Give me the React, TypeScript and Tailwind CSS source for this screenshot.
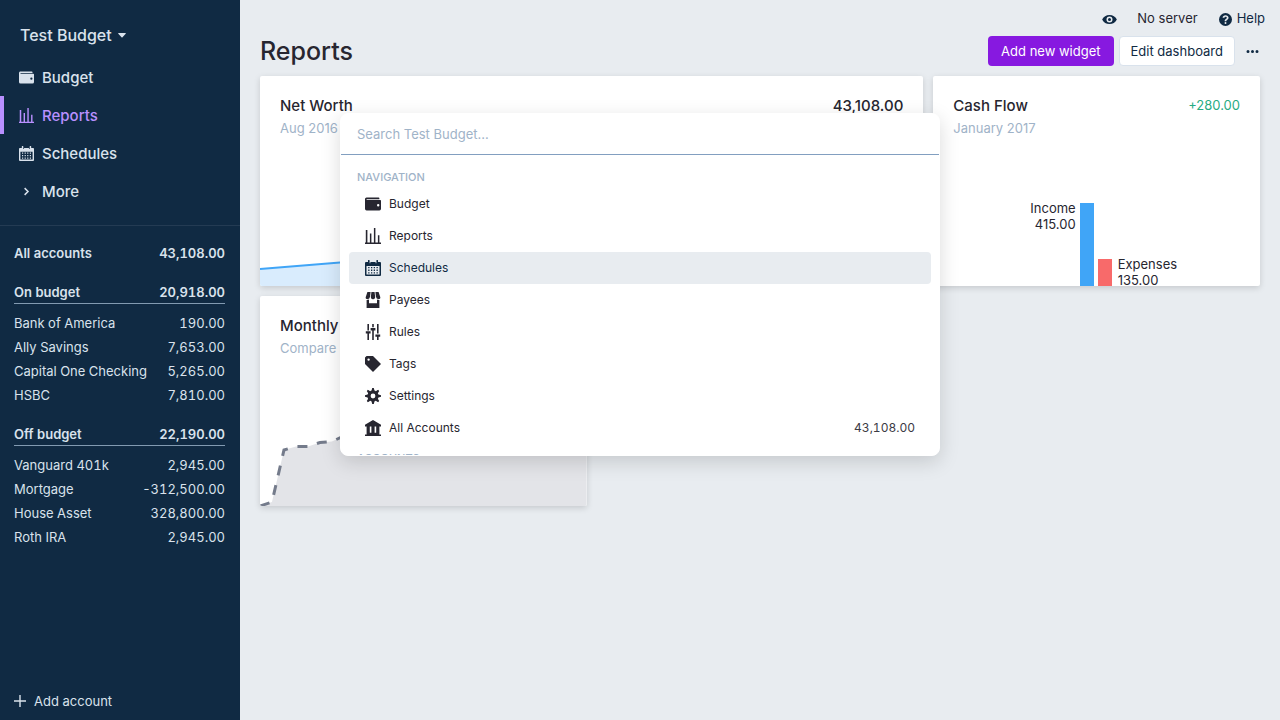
import type { ReactNode } from 'react';

type IconProps = { className?: string };

function Svg({ className, box = 20, children }: IconProps & { box?: number; children: ReactNode }) {
  return (
    <svg viewBox={`0 0 ${box} ${box}`} className={`shrink-0 fill-current ${className ?? ''}`} aria-hidden="true">
      {children}
    </svg>
  );
}

const WalletIcon = (p: IconProps) => (
  <Svg {...p}>
    <path d="M0 4c0-1.1.9-2 2-2h15a1 1 0 0 1 1 1v1H2v1h17a1 1 0 0 1 1 1v10a2 2 0 0 1-2 2H2a2 2 0 0 1-2-2V4zm16.5 9a1.5 1.5 0 1 0 0-3 1.5 1.5 0 0 0 0 3z" />
  </Svg>
);

const ReportsIcon = (p: IconProps) => (
  <Svg {...p} box={16}>
    <path d="M0 14.6h16V16H0zM.8 2h1.6v13H.8zM4.9 5.4h1.5V15H4.9zM8.9 0h1.5v15H8.9zM12.9 7.2h1.5V15h-1.5z" />
  </Svg>
);

const CalendarIcon = (p: IconProps) => (
  <Svg {...p} box={16}>
    <path
      fillRule="evenodd"
      d="M1 2h2V.7a.8.800 0 0 1 1.600 0V3.300h.8V2h5.200v1.300h.8V.7a.8.800 0 0 1 1.600 0V2h2a1 1 0 0 1 1 1v12a1 1 0 0 1-1 1H1a1 1 0 0 1-1-1V3a1 1 0 0 1 1-1zM1.500 6v8.500h13V6z"
    />
    <path d="M3.200 7h1.300v1.300H3.200zm2.800 0h1.300v1.300H6zm2.700 0H10v1.300H8.700zm2.800 0h1.300v1.300h-1.300zM3.200 9.600h1.300v1.300H3.200zm2.800 0h1.300v1.300H6zm2.700 0H10v1.300H8.700zm2.800 0h1.300v1.300h-1.300zM3.200 12.200h1.300v1.300H3.200zm2.800 0h1.300v1.300H6zm2.700 0H10v1.300H8.700zm2.800 0h1.300v1.300h-1.300z" />
  </Svg>
);

const StoreIcon = (p: IconProps) => (
  <Svg {...p}>
    <path d="M18 9.870V20H2V9.870a4.250 4.250 0 0 0 3-.38V14h10V9.500a4.260 4.260 0 0 0 3 .37zM3 0h4l-.67 6.030A3.430 3.430 0 0 1 3 9C1.340 9 .42 7.730.95 6.150L3 0zm5 0h4l.7 6.300c.17 1.500-.91 2.700-2.420 2.700h-.56A2.380 2.380 0 0 1 7.300 6.300L8 0zm5 0h4l2.050 6.150C19.580 7.730 18.650 9 17 9a3.420 3.420 0 0 1-3.330-2.970L13 0z" />
  </Svg>
);

const TuningIcon = (p: IconProps) => (
  <Svg {...p}>
    <path d="M17 16v4h-2v-4h-2v-3h6v3h-2zM1 9h6v3H1V9zm6-4h6v3H7V5zM3 0h2v8H3V0zm12 0h2v12h-2V0zM9 0h2v4H9V0zM3 12h2v8H3v-8zm6-4h2v12H9V8z" />
  </Svg>
);

const TagIcon = (p: IconProps) => (
  <Svg {...p}>
    <path d="M0 10V2l2-2h8l10 10-10 10L0 10zm4.500-4a1.500 1.500 0 1 0 0-3 1.500 1.500 0 0 0 0 3z" />
  </Svg>
);

const CogIcon = (p: IconProps) => (
  <Svg {...p}>
    <path d="M3.940 6.500L2.220 3.640l1.420-1.420L6.500 3.940c.52-.3 1.100-.54 1.700-.7L9 0h2l.8 3.240c.6.16 1.180.4 1.700.7l2.860-1.720 1.420 1.420-1.720 2.860c.3.52.54 1.100.7 1.700L20 9v2l-3.240.8c-.16.6-.4 1.180-.7 1.700l1.720 2.860-1.420 1.420-2.860-1.720c-.52.3-1.100.54-1.700.7L11 20H9l-.8-3.240c-.6-.16-1.180-.4-1.700-.7l-2.860 1.720-1.420-1.420 1.720-2.860c-.3-.52-.54-1.100-.7-1.700L0 11V9l3.240-.8c.16-.6.4-1.180.7-1.700zM10 13a3 3 0 1 0 0-6 3 3 0 0 0 0 6z" />
  </Svg>
);

const BankIcon = (p: IconProps) => (
  <Svg {...p}>
    <path d="M0 6l10-6 10 6v2H0V6zm0 12h20v2H0v-2zm2-2h16v2H2v-2zm0-8h4v8H2V8zm6 0h4v8H8V8zm6 0h4v8h-4V8z" />
  </Svg>
);

const EyeIcon = (p: IconProps) => (
  <Svg {...p}>
    <path d="M.2 10a11 11 0 0 1 19.600 0A11 11 0 0 1 .2 10zm9.800 4a4 4 0 1 0 0-8 4 4 0 0 0 0 8zm0-2a2 2 0 1 1 0-4 2 2 0 0 1 0 4z" />
  </Svg>
);

const HelpIcon = (p: IconProps) => (
  <Svg {...p}>
    <path
      fillRule="evenodd"
      d="M10 20a10 10 0 1 1 0-20 10 10 0 0 1 0 20zm2-12.800c0 .5-.2.900-.6 1.200L10 9.500c-.8.700-1.300 1.400-1.300 2.500v.8h2.700v-.6c0-.4.2-.7.500-1l1.400-1.100c.9-.7 1.400-1.700 1.400-2.900C14.700 4.800 12.700 3.300 10.100 3.300 7.500 3.300 5.600 4.800 5.500 7.300h2.800c.1-1 .8-1.600 1.800-1.600s1.900.5 1.900 1.500zM10 14a1.500 1.500 0 1 0 0 3 1.500 1.500 0 0 0 0-3z"
    />
  </Svg>
);

const DotsIcon = (p: IconProps) => (
  <Svg {...p}>
    <path d="M4 12a2 2 0 1 1 0-4 2 2 0 0 1 0 4zm6 0a2 2 0 1 1 0-4 2 2 0 0 1 0 4zm6 0a2 2 0 1 1 0-4 2 2 0 0 1 0 4z" />
  </Svg>
);

const ChevronIcon = (p: IconProps) => (
  <Svg {...p} box={12}>
    <path d="M3.500 1.500L8 6l-4.500 4.500" fill="none" stroke="currentColor" strokeWidth="2" />
  </Svg>
);

const PlusIcon = (p: IconProps) => (
  <Svg {...p} box={12}>
    <path d="M5.300 0h1.400v5.300H12v1.400H6.700V12H5.300V6.700H0V5.300h5.300z" />
  </Svg>
);

const CaretIcon = (p: IconProps) => (
  <Svg {...p} box={8}>
    <path d="M.6 2h6.800a.4.4 0 0 1 .3.700L4.500 6.300a.7.700 0 0 1-1 0L.3 2.700A.4.4 0 0 1 .6 2z" />
  </Svg>
);

type Icon = (p: IconProps) => ReactNode;

const mainNav: { label: string; icon: Icon; active?: boolean }[] = [
  { label: 'Budget', icon: WalletIcon },
  { label: 'Reports', icon: ReportsIcon, active: true },
  { label: 'Schedules', icon: CalendarIcon },
  { label: 'More', icon: ChevronIcon },
];

const accountGroups = [
  {
    name: 'On budget',
    total: '20,918.00',
    accounts: [
      ['Bank of America', '190.00'],
      ['Ally Savings', '7,653.00'],
      ['Capital One Checking', '5,265.00'],
      ['HSBC', '7,810.00'],
    ],
  },
  {
    name: 'Off budget',
    total: '22,190.00',
    accounts: [
      ['Vanguard 401k', '2,945.00'],
      ['Mortgage', '-312,500.00'],
      ['House Asset', '328,800.00'],
      ['Roth IRA', '2,945.00'],
    ],
  },
];

const commands: { label: string; icon: Icon; selected?: boolean; amount?: string }[] = [
  { label: 'Budget', icon: WalletIcon },
  { label: 'Reports', icon: ReportsIcon },
  { label: 'Schedules', icon: CalendarIcon, selected: true },
  { label: 'Payees', icon: StoreIcon },
  { label: 'Rules', icon: TuningIcon },
  { label: 'Tags', icon: TagIcon },
  { label: 'Settings', icon: CogIcon },
  { label: 'All Accounts', icon: BankIcon, amount: '43,108.00' },
];

function Sidebar() {
  return (
    <aside className="flex w-60 shrink-0 flex-col bg-[#102a43] text-[#d9e2ec]">
      <button type="button" className="mt-5 flex h-[30px] items-center gap-1.5 self-start pl-5 text-base font-medium">
        Test Budget
        <CaretIcon className="size-2" />
      </button>
      <nav className="mt-2 border-b border-[#243b53] pb-[15px]">
        {mainNav.map(({ label, icon: ItemIcon, active }) => (
          <a
            key={label}
            href="#"
            className={`flex h-[38px] items-center gap-2 border-l-4 pl-[15px] text-[15px] font-medium ${
              active ? 'border-[#b990ff] text-[#b990ff]' : 'border-transparent'
            }`}
          >
            <span className="flex w-[15px] justify-center">
              <ItemIcon className={label === 'More' ? 'size-[9px]' : 'size-[15px]'} />
            </span>
            <span className="pt-0.5">{label}</span>
          </a>
        ))}
      </nav>
      <div className="flex flex-col pt-4 pr-[15px] pl-3.5 text-[13px] tabular-nums">
        <a href="#" className="flex h-6 items-center justify-between font-semibold">
          <span>All accounts</span>
          <span>43,108.00</span>
        </a>
        {accountGroups.map((group) => (
          <div key={group.name} className="mt-3.5">
            <a
              href="#"
              className="mb-2 flex h-6 items-center justify-between border-b border-[#829ab1] pt-0.5 font-semibold"
            >
              <span>{group.name}</span>
              <span>{group.total}</span>
            </a>
            {group.accounts.map(([name, balance]) => (
              <a key={name} href="#" className="flex h-6 items-center justify-between">
                <span>{name}</span>
                <span>{balance}</span>
              </a>
            ))}
          </div>
        ))}
      </div>
      <button type="button" className="mt-auto mb-2 flex items-center gap-2 pl-3.5 text-[13px] leading-[22px]">
        <PlusIcon className="size-3" />
        Add account
      </button>
    </aside>
  );
}

function Card({ className, children }: { className?: string; children: ReactNode }) {
  return (
    <section
      className={`flex flex-col overflow-hidden rounded-xs bg-white shadow-[0_2px_6px_rgba(0,0,0,0.15)] ${className ?? ''}`}
    >
      {children}
    </section>
  );
}

function CardHeader({ title, subtitle, value }: { title: string; subtitle: string; value?: ReactNode }) {
  return (
    <header className="flex items-start justify-between px-5 pt-5">
      <div>
        <h2 className="text-[15px] leading-5 font-medium">{title}</h2>
        <p className="mt-0.5 text-[13px] leading-5 text-[#9fb3c8]">{subtitle}</p>
      </div>
      {value}
    </header>
  );
}

function Dashboard() {
  return (
    <div className="grid auto-rows-[210px] grid-cols-3 gap-2.5 px-5">
      <Card className="col-span-2">
        <CardHeader
          title="Net Worth"
          subtitle="Aug 2016 - Jan 2017"
          value={<span className="text-[15px] leading-5 font-medium">43,108.00</span>}
        />
        <svg className="mt-auto h-10 w-full" viewBox="0 0 663 40" preserveAspectRatio="none" aria-hidden="true">
          <path d="M0 23L80 16.500L663 2V40H0z" fill="#d9ecfd" />
          <path d="M0 23L80 16.500L663 2" fill="none" stroke="#40a5f7" strokeWidth="2" />
        </svg>
      </Card>
      <Card>
        <CardHeader
          title="Cash Flow"
          subtitle="January 2017"
          value={<span className="text-[13px] leading-[18px] text-[#27ab83]">+280.00</span>}
        />
        <div className="mt-auto flex items-end justify-center gap-1 pr-0.5 text-[13px] leading-4">
          <div className="flex h-[83px] flex-1 justify-end gap-1">
            <div className="-mt-[3px] text-right">
              Income
              <br />
              415.00
            </div>
            <div className="w-3.5 bg-[#40a5f7]" />
          </div>
          <div className="flex h-[27px] flex-1 gap-1.5">
            <div className="w-3.5 bg-[#f86a6a]" />
            <div className="-mt-[3px]">
              Expenses
              <br />
              135.00
            </div>
          </div>
        </div>
      </Card>
      <Card>
        <CardHeader title="Monthly Spending" subtitle="Compare Jan 2017 to average" />
        <svg className="mt-auto h-[90px] w-full" viewBox="0 0 327 90" preserveAspectRatio="none" aria-hidden="true">
          <path d="M0 90L12 86L24 34L36 30.500L48 30.500L60 26.500L72 25.500L84 20L327 10V90z" fill="#e3e4e8" />
          <path
            d="M0 90L12 86L24 34L36 30.500L48 30.500L60 26.500L72 25.500L84 20L327 10"
            fill="none"
            stroke="#747b8b"
            strokeWidth="3"
            strokeDasharray="10 10"
          />
        </svg>
      </Card>
    </div>
  );
}

function CommandPalette() {
  return (
    <div
      role="dialog"
      aria-label="Command bar"
      className="absolute top-[113px] left-1/2 flex h-[343px] w-[600px] -translate-x-1/2 flex-col overflow-hidden rounded-lg border border-white bg-white shadow-[0_6px_20px_rgba(0,0,0,0.15)]"
    >
      <input
        type="text"
        aria-label="Search Test Budget"
        placeholder="Search Test Budget…"
        className="h-[41px] shrink-0 border-b border-[#829fc0] px-4 text-[13px] outline-none placeholder:text-[#9fb3c8]"
      />
      <div className="flex-1 overflow-hidden p-2">
        <h3 className="px-2 pt-1 text-[11px] leading-[21px] font-medium text-[#9fb3c8] uppercase">Navigation</h3>
        <ul>
          {commands.map(({ label, icon: ItemIcon, selected, amount }) => (
            <li key={label}>
              <button
                type="button"
                className={`flex h-8 w-full items-center gap-2 rounded px-4 text-left text-xs ${
                  selected ? 'bg-[#e8ecf0] text-[#102a43]' : ''
                }`}
              >
                <ItemIcon className="size-4" />
                <span className="flex-1">{label}</span>
                {amount && <span className="tabular-nums opacity-90">{amount}</span>}
              </button>
            </li>
          ))}
        </ul>
        <h3 className="px-2 pt-1 text-[11px] leading-[21px] font-medium text-[#9fb3c8] uppercase">Accounts</h3>
      </div>
    </div>
  );
}

export default function App() {
  return (
    <div className="relative flex min-h-screen bg-[#e8ecf0] font-['Inter',sans-serif] text-[#272630]">
      <Sidebar />
      <main className="min-w-0 flex-1">
        <div className="flex h-9 items-center justify-end pt-0.5 pr-[15px] text-[13px]">
          <button type="button" aria-label="Toggle privacy mode" className="mr-5 text-[#102a43]">
            <EyeIcon className="size-[15px]" />
          </button>
          <span className="mr-[21px]">No server</span>
          <button type="button" className="flex items-center gap-[5px] text-[#102a43]">
            <HelpIcon className="size-[13px]" />
            Help
          </button>
        </div>
        <div className="mb-2.5 flex h-[30px] items-center justify-between px-5">
          <h1 className="text-[25px] leading-[30px] font-medium">Reports</h1>
          <div className="flex gap-[5px] text-[13px]">
            <button type="button" className="h-[30px] rounded bg-[#8719e0] px-[13px] pt-0.5 text-white">
              Add new widget
            </button>
            <button type="button" className="h-[30px] rounded border border-[#d9e2ec] bg-white px-[11px] pt-0.5 text-[#102a43]">
              Edit dashboard
            </button>
            <button type="button" aria-label="Menu" className="pl-[5px] text-[#102a43]">
              <DotsIcon className="size-[15px]" />
            </button>
          </div>
        </div>
        <Dashboard />
      </main>
      <CommandPalette />
    </div>
  );
}
